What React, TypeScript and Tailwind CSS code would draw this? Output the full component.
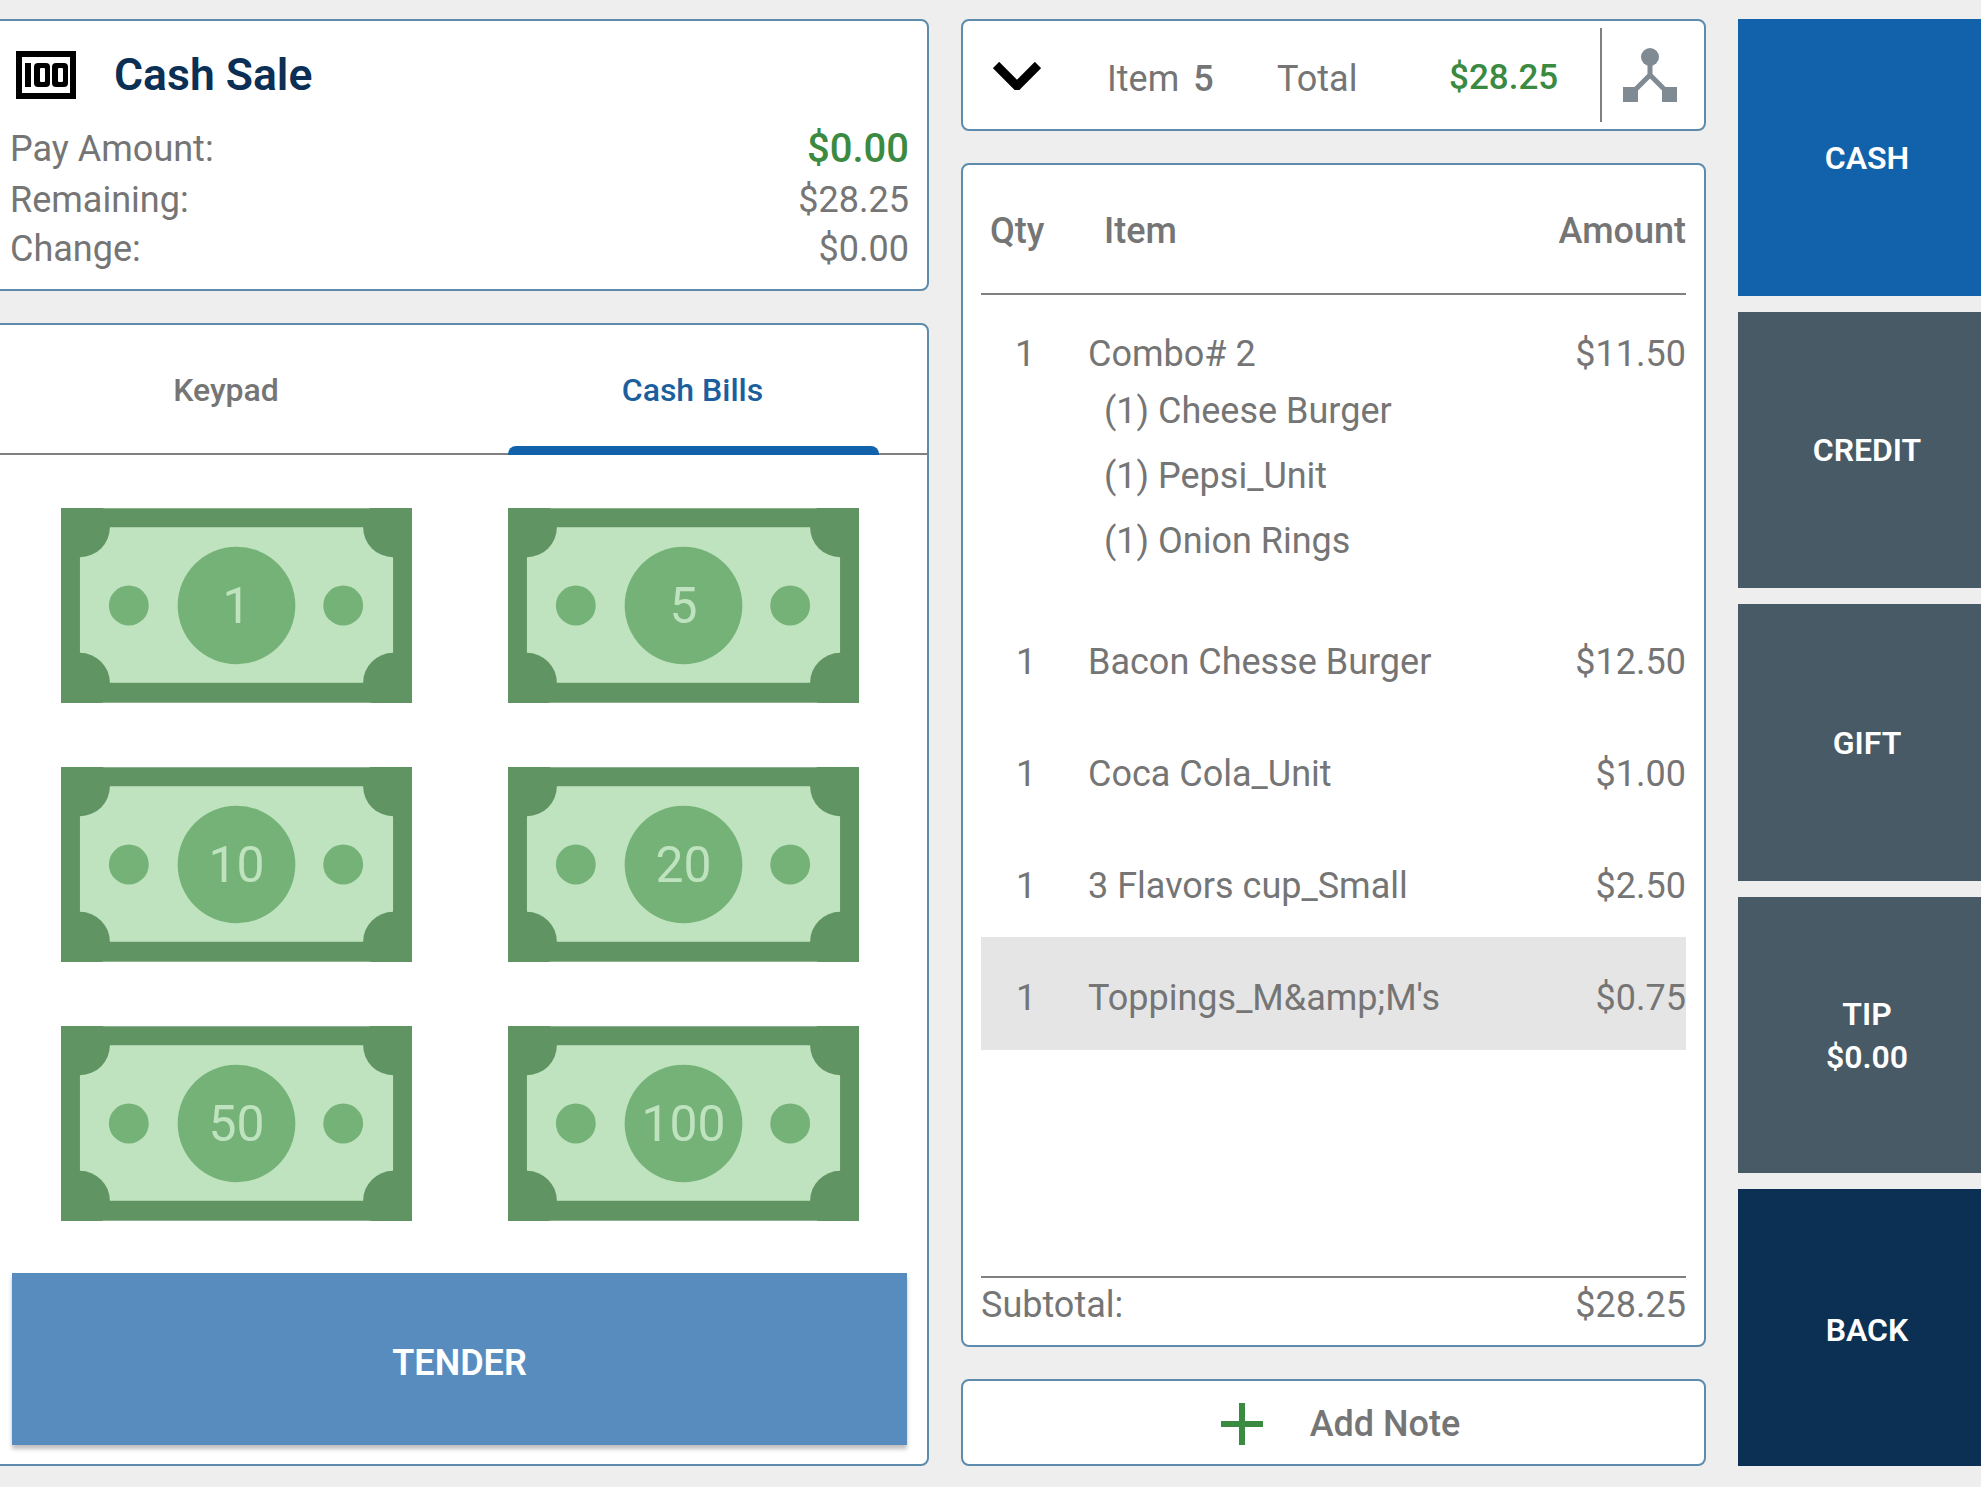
const font = { fontFamily: "Roboto, sans-serif" };

const BILLS = ["1", "5", "10", "20", "50", "100"];

const ITEMS = [
  { name: "Bacon Chesse Burger", amount: "$12.50" },
  { name: "Coca Cola_Unit", amount: "$1.00" },
  { name: "3 Flavors cup_Small", amount: "$2.50" },
];

const TENDERS = [
  { label: "CASH", bg: "bg-[#1261ab]", offset: "pt-[2px]" },
  { label: "CREDIT", bg: "bg-[#475a65]", offset: "pt-[2px]" },
  { label: "GIFT", bg: "bg-[#475a65]", offset: "pt-[2px]" },
  { label: "TIP", sub: "$0.00", bg: "bg-[#475a65]", offset: "pt-[2px]" },
  { label: "BACK", bg: "bg-[#0b3054]", offset: "pt-[5px]" },
];

function Bill({ value }: { value: string }) {
  return (
    <svg className="h-[195px] w-[351px]" viewBox="0 0 352 195">
      <rect fill="#619463" height="195" width="352" />
      <rect fill="#bfe3bf" height="156" width="314" x="19" y="19" />
      <circle cx="19" cy="19" fill="#619463" r="30" />
      <circle cx="333" cy="19" fill="#619463" r="30" />
      <circle cx="19" cy="175" fill="#619463" r="30" />
      <circle cx="333" cy="175" fill="#619463" r="30" />
      <circle cx="68" cy="97.5" fill="#75b278" r="20" />
      <circle cx="283" cy="97.5" fill="#75b278" r="20" />
      <circle cx="176" cy="97.5" fill="#75b278" r="59" />
      <text
        dominantBaseline="central"
        fill="#bfe3bf"
        fontFamily="Roboto, sans-serif"
        fontSize="50"
        textAnchor="middle"
        x="176"
        y="98"
      >
        {value}
      </text>
    </svg>
  );
}

function CashIcon() {
  return (
    <svg className="h-[48px] w-[60px]" viewBox="0 0 60 48">
      <rect fill="none" height="42" stroke="#000" strokeWidth="6" width="54" x="3" y="3" />
      <rect fill="#000" height="24" width="6" x="9" y="12" />
      <rect fill="#000" height="24" rx="4" width="16" x="18" y="12" />
      <rect fill="#fff" height="14" rx="1" width="5" x="24" y="17" />
      <rect fill="#000" height="24" rx="4" width="16" x="36" y="12" />
      <rect fill="#fff" height="14" rx="1" width="5" x="42" y="17" />
    </svg>
  );
}

function SplitIcon() {
  return (
    <svg className="h-[54px] w-[54px]" viewBox="0 0 54 54">
      <circle cx="27" cy="9" fill="#7f8a93" r="9" />
      <path d="M27 9 V27 L8 46 M27 27 L46 46" fill="none" stroke="#7f8a93" strokeWidth="5" />
      <rect fill="#7f8a93" height="15" width="15" x="0" y="39" />
      <rect fill="#7f8a93" height="15" width="15" x="39" y="39" />
    </svg>
  );
}

function ItemRow({ name, amount, selected }: { name: string; amount: string; selected?: boolean }) {
  return (
    <div className={`flex items-center pt-[9px] ${selected ? "h-[113px] bg-[#e5e5e5]" : "h-[112px]"}`}>
      <span className="w-[107px] pl-[35px]">1</span>
      <span className="flex-1">{name}</span>
      <span>{amount}</span>
    </div>
  );
}

export default function App() {
  return (
    <div
      className="flex h-[1487px] w-[1981px] gap-[32px] overflow-hidden bg-[#eeeeee] pt-[19px] pb-[21px] text-[36px] text-[#757575]"
      style={font}
    >
      <div className="-ml-[10px] flex w-[939px] shrink-0 flex-col gap-[32px]">
        <section className="h-[272px] rounded-lg border-2 border-[#5d8bab] bg-white pr-[18px] pl-[18px]">
          <div className="flex h-[107px] items-center gap-[38px] pl-[6px]">
            <CashIcon />
            <h1 className="pt-[2px] text-[44.5px] font-semibold text-[#0b2f55]">Cash Sale</h1>
          </div>
          <div className="flex h-[40px] items-center justify-between pt-[1px]">
            <span>Pay Amount:</span>
            <span className="text-[40px] font-medium text-[#3b8a42]">$0.00</span>
          </div>
          <div className="mt-[12px] flex h-[40px] items-center justify-between">
            <span>Remaining:</span>
            <span>$28.25</span>
          </div>
          <div className="mt-[9px] flex h-[40px] items-center justify-between">
            <span>Change:</span>
            <span>$0.00</span>
          </div>
        </section>

        <section className="flex-1 rounded-lg border-2 border-[#5d8bab] bg-white">
          <div className="relative flex h-[130px] items-center border-b-2 border-[#808080] pt-[2px] text-[32px] font-medium">
            <span className="w-[468px] text-center">Keypad</span>
            <span className="w-[465px] text-center text-[#1b5f9f]">Cash Bills</span>
            <div className="absolute -bottom-[2px] left-[516px] h-[9px] w-[371px] rounded-t-lg bg-[#1261ab]" />
          </div>
          <div className="grid grid-cols-[351px_351px] gap-x-[96px] gap-y-[64px] pt-[53px] pl-[69px]">
            {BILLS.map((bill) => (
              <Bill key={bill} value={bill} />
            ))}
          </div>
          <button
            className="mt-[52px] ml-[20px] flex h-[172px] w-[895px] items-center justify-center bg-[#588cbf] pt-[7px] text-[36px] font-semibold text-white shadow-[0_4px_4px_rgba(0,0,0,0.25)]"
            type="button"
          >
            TENDER
          </button>
        </section>
      </div>

      <div className="flex w-[745px] shrink-0 flex-col">
        <section className="flex h-[112px] shrink-0 items-center rounded-lg border-2 border-[#5d8bab] bg-white">
          <svg className="mt-[2px] ml-[30px] h-[28px] w-[48px]" viewBox="0 0 48 28">
            <path d="M3 3 L24 24 L45 3" fill="none" stroke="#000" strokeWidth="9" />
          </svg>
          <span className="ml-[66px] w-[170px] pt-[8px]">
            Item<span className="ml-[14px] font-medium">5</span>
          </span>
          <span className="w-[172px] pt-[8px]">Total</span>
          <span className="w-[110px] pt-[6px] text-[35px] font-medium text-[#3b8a42]">$28.25</span>
          <div className="mr-[21px] ml-[41px] h-[94px] w-[2px] bg-[#808080]" />
          <SplitIcon />
        </section>

        <section className="mt-[32px] flex flex-1 flex-col rounded-lg border-2 border-[#5d8bab] bg-white pr-[18px] pl-[18px]">
          <div className="flex h-[130px] shrink-0 items-center border-b-2 border-[#808080] pt-[4px] font-medium">
            <span className="w-[123px] pl-[9px]">Qty</span>
            <span className="flex-1">Item</span>
            <span>Amount</span>
          </div>
          <div className="flex flex-1 flex-col">
            <div className="flex justify-between pt-[32px]">
              <span className="w-[107px] pl-[34px]">1</span>
              <div className="flex-1">
                <div className="h-[57px]">Combo# 2</div>
                <div className="pl-[16px]">
                  <div className="h-[65px]">(1) Cheese Burger</div>
                  <div className="h-[65px]">(1) Pepsi_Unit</div>
                  <div className="h-[65px]">(1) Onion Rings</div>
                </div>
              </div>
              <span>$11.50</span>
            </div>
            <div className="mt-[22px]">
              {ITEMS.map((item) => (
                <ItemRow amount={item.amount} key={item.name} name={item.name} />
              ))}
              <ItemRow amount="$0.75" name="Toppings_M&amp;amp;M's" selected />
            </div>
          </div>
          <div className="flex h-[69px] shrink-0 items-center justify-between border-t-2 border-[#808080] pb-[14px]">
            <span>Subtotal:</span>
            <span>$28.25</span>
          </div>
        </section>

        <section className="mt-[32px] flex h-[87px] shrink-0 items-center justify-center gap-[47px] rounded-lg border-2 border-[#5d8bab] bg-white pt-[2px] pl-[14px] font-medium">
          <svg className="h-[42px] w-[42px]" viewBox="0 0 42 42">
            <path d="M21 0 V42 M0 21 H42" fill="none" stroke="#3b8a42" strokeWidth="6" />
          </svg>
          <span>Add Note</span>
        </section>
      </div>

      <div className="flex w-[258px] shrink-0 flex-col gap-[16px]">
        {TENDERS.map((tender) => (
          <button
            className={`flex flex-1 items-center justify-center text-[32px] leading-[43px] font-semibold text-white ${tender.bg}`}
            key={tender.label}
            type="button"
          >
            <div className={`flex flex-col items-center ${tender.offset}`}>
              <span>{tender.label}</span>
              {tender.sub && <span>{tender.sub}</span>}
            </div>
          </button>
        ))}
      </div>
    </div>
  );
}
